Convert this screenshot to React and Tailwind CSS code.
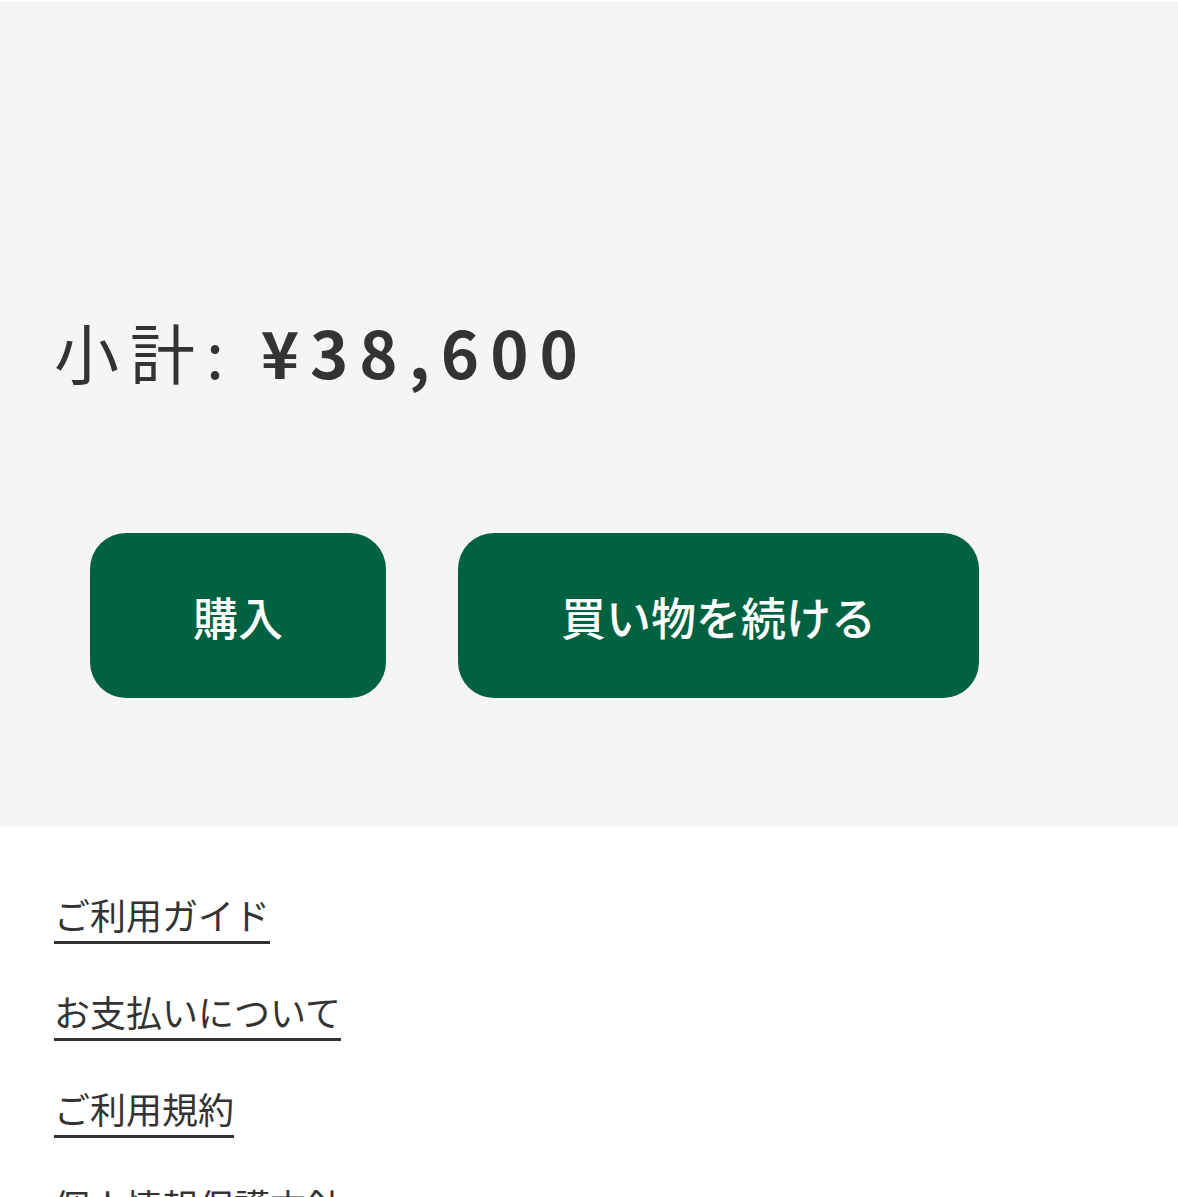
import React from 'react';

const links = [
  { label: 'ご利用ガイド', href: '#guide' },
  { label: 'お支払いについて', href: '#payment' },
  { label: 'ご利用規約', href: '#terms' },
  { label: '個人情報保護方針', href: '#privacy' },
];

function CartButton({ children }) {
  return (
    <button
      type="button"
      className="rounded-[36px] bg-[#006241] px-[103px] pt-[51px] pb-[49px] text-[45px] leading-[65px] font-medium text-white"
    >
      {children}
    </button>
  );
}

export default function App() {
  return (
    <div className="min-h-screen bg-white font-['Noto_Sans_CJK_JP',sans-serif] text-[#333]">
      <main className="mt-0.5 bg-[#f5f5f5] px-[54px] pt-[295px] pb-[129px]">
        <p className="text-[65px] leading-[108px] tracking-[11px]">
          小計: <strong className="font-bold">¥38,600</strong>
        </p>

        <div className="mt-32 flex flex-wrap gap-[72px] px-9">
          <CartButton>購入</CartButton>
          <CartButton>買い物を続ける</CartButton>
        </div>
      </main>

      <footer className="px-[54px] pt-[60px]">
        <ul className="flex flex-col items-start gap-10">
          {links.map((link) => (
            <li key={link.href}>
              <a
                href={link.href}
                className="block border-b-3 border-[#333] text-[36px] leading-[54px]"
              >
                {link.label}
              </a>
            </li>
          ))}
        </ul>
      </footer>
    </div>
  );
}
